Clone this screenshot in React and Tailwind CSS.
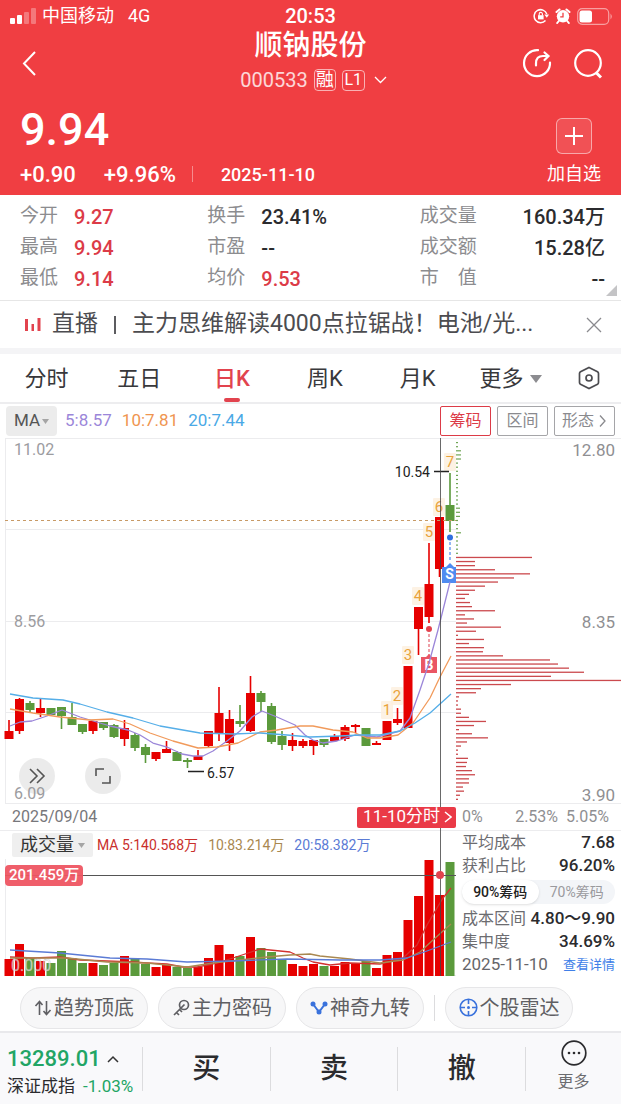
import { useState } from "react";

const UP = "#e60000";
const DOWN = "#5b9a3c";

// [high, bodyTop, bodyBottom, low, isUp], y inside the chart
const candles = [
  [282, 293, 301, 301, 1],
  [260, 261, 293, 296, 1],
  [263, 265, 272, 274, 0],
  [261, 270, 275, 279, 1],
  [270, 270, 277, 277, 0],
  [269, 269, 278, 291, 0],
  [265, 279, 287, 287, 0],
  [286, 286, 294, 296, 0],
  [283, 283, 293, 296, 1],
  [284, 284, 290, 292, 0],
  [286, 287, 299, 300, 0],
  [282, 290, 301, 308, 1],
  [295, 297, 310, 313, 0],
  [306, 309, 317, 325, 0],
  [314, 314, 321, 323, 1],
  [303, 311, 315, 315, 1],
  [313, 314, 323, 323, 0],
  [320, 322, 324, 330, 0],
  [312, 318, 322, 322, 1],
  [293, 293, 308, 310, 1],
  [249, 275, 296, 303, 1],
  [272, 281, 305, 313, 1],
  [267, 283, 286, 289, 0],
  [238, 255, 293, 294, 1],
  [253, 255, 264, 274, 0],
  [265, 268, 304, 306, 0],
  [293, 298, 307, 312, 0],
  [295, 302, 308, 313, 1],
  [301, 303, 308, 310, 1],
  [302, 302, 308, 317, 1],
  [301, 301, 307, 309, 0],
  [296, 298, 303, 303, 1],
  [287, 289, 301, 303, 1],
  [286, 287, 289, 295, 1],
  [290, 290, 308, 308, 0],
  [303, 305, 307, 307, 1],
  [283, 283, 302, 302, 1],
  [270, 281, 285, 287, 1],
  [228, 228, 290, 290, 1],
  [169, 169, 191, 217, 1],
  [105, 146, 179, 185, 1],
  [79, 79, 131, 139, 1],
  [35, 67, 83, 94, 0],
];

const volumes = [
  17, 32, 18, 15, 13, 25, 18, 13, 13, 11, 13, 20, 18, 12, 9, 11, 9, 8, 9, 18,
  31, 22, 20, 39, 28, 24, 16, 12, 10, 12, 10, 10, 14, 13, 15, 8, 21, 24, 56,
  80, 116, 81, 114,
];

const priceLines = [
  {
    color: "#9b86d9",
    points:
      "10,288 20,284 32,283 47,278 62,272 80,279 100,285 110,288 128,292 140,297 153,305 167,309 182,316 193,318 203,318 213,313 227,303 240,293 252,279 262,273 277,279 295,287 305,297 313,302 323,305 337,303 355,297 377,299 400,293 410,280 420,252 429,225 438,192 450,144",
  },
  {
    color: "#f19a5b",
    points:
      "10,271 33,275 60,279 90,282 113,281 130,286 150,295 173,303 198,310 217,309 238,305 260,294 277,292 300,288 313,288 333,292 353,294 367,300 380,300 398,297 413,285 430,260 440,239 451,218",
  },
  {
    color: "#55aee8",
    points:
      "10,256 33,260 63,262 80,266 107,274 133,280 160,288 200,295 233,296 260,295 287,297 310,299 340,298 360,297 380,297 400,293 415,285 430,275 451,256",
  },
];

const volumeLines = [
  {
    color: "#d3312f",
    points:
      "10,98 33,99 60,98 80,101 107,102 133,103 147,104 167,105 183,108 197,108 213,105 233,99 260,90 290,93 303,99 313,103 330,106 350,104 380,105 403,99 417,86 427,66 437,49 443,39 451,29",
  },
  {
    color: "#a98850",
    points:
      "10,99 67,99 107,103 147,104 187,108 213,104 240,101 267,98 290,96 310,95 320,97 350,100 380,104 403,101 420,93 433,81 443,72 451,65",
  },
  {
    color: "#5b7bd5",
    points:
      "10,91 60,94 80,96 110,99 147,100 187,103 233,102 287,100 340,101 380,101 407,99 427,92 451,83",
  },
];

// nine-turn counter labels above the candles
const turns = [
  [387, 272, 1],
  [397, 258, 2],
  [408, 217, 3],
  [418, 158, 4],
  [429, 94, 5],
  [439, 69, 6],
  [450, 24, 7],
];

const greenChips = [
  2, 2, 5, 5, 5, 2, 2, 2, 2, 2, 2, 2, 2, 2, 2, 2, 4, 4, 4, 2, 2, 2, 5, 2, 2, 2,
  2, 2,
];
const redChips = [
  76, 19, 19, 39, 74, 58, 42, 29, 19, 13, 9, 14, 16, 39, 9, 18, 11, 45, 20, 2,
  28, 13, 28, 27, 47, 94, 102, 113, 128, 95, 165, 55, 25, 20, 3, 2, 2, 5, 5, 13,
  30, 18, 3, 16, 32, 11, 5, 2, 2, 12, 11, 10, 16, 19, 13, 13, 7, 8, 4, 2,
];

const quotes = [
  ["今开", "9.27", "text-[#dc3b47]"],
  ["换手", "23.41%", "text-[#2b2b2e]"],
  ["成交量", "160.34万", "text-[#2b2b2e]"],
  ["最高", "9.94", "text-[#dc3b47]"],
  ["市盈", "--", "text-[#2b2b2e]"],
  ["成交额", "15.28亿", "text-[#2b2b2e]"],
  ["最低", "9.14", "text-[#dc3b47]"],
  ["均价", "9.53", "text-[#dc3b47]"],
  ["市　值", "--", "text-[#2b2b2e]"],
];

const candleX = (i) => 9 + i * 10.5;

function StatusBar() {
  return (
    <div className="relative flex h-8 items-center justify-between pr-2 pl-2.5 text-lg">
      <div className="flex items-center gap-1.5">
        <svg width="26" height="18" fill="#fff">
          <rect x="0" y="11" width="5" height="6" rx="1" />
          <rect x="7" y="8" width="5" height="9" rx="1" />
          <rect x="14" y="5" width="5" height="12" rx="1" opacity="0.3" />
          <rect x="21" y="1" width="5" height="16" rx="1" opacity="0.3" />
        </svg>
        <span>中国移动</span>
        <span className="ml-2">4G</span>
      </div>
      <span className="absolute left-1/2 -translate-x-1/2 text-xl font-medium">
        20:53
      </span>
      <div className="flex items-center gap-1.5">
        <svg width="16" height="16" fill="none" stroke="#fff" strokeWidth="1.5">
          <path d="M12.500 12.500A6.500 6.500 0 1 1 13.800 6" />
          <path d="M11.300 6.500h4.700L13.800 9.800z" fill="#fff" stroke="none" />
          <rect x="5" y="7.2" width="5.6" height="4.2" fill="#fff" stroke="none" />
          <path d="M6.2 7.5V6a1.6 1.6 0 0 1 3.2 0v1.5" strokeWidth="1.1" />
        </svg>
        <svg width="16" height="16" fill="#fff">
          <circle cx="8" cy="8.3" r="6.2" />
          <path
            d="M1.500 4 4.500 1.500M14.500 4 11.500 1.500M3.8 13 2.2 15M12.2 13l1.6 2"
            stroke="#fff"
            strokeWidth="2"
            strokeLinecap="round"
          />
          <path d="M8 4.8v4H5.2" fill="none" stroke="#f03e42" strokeWidth="1.3" />
        </svg>
        <svg width="36" height="17">
          <rect
            x="0.7"
            y="0.7"
            width="31"
            height="15.6"
            rx="4.5"
            fill="none"
            stroke="#fff"
            strokeOpacity="0.5"
            strokeWidth="1.2"
          />
          <rect x="2.5" y="2.5" width="12.5" height="12" rx="2.5" fill="#fff" />
          <path d="M33.5 5.5q2.6 3 0 6z" fill="#fff" opacity="0.5" />
        </svg>
      </div>
    </div>
  );
}

function Header() {
  return (
    <header className="bg-[#f03e42] pb-[3px] text-white">
      <StatusBar />
      <div className="flex items-start justify-between px-4">
        <button aria-label="返回" className="mt-4 w-[84px] pl-1">
          <svg width="18" height="30" fill="none" stroke="#fff" strokeWidth="2">
            <path d="M15 4 4 15.500 15 27" />
          </svg>
        </button>
        <div className="flex flex-col items-center">
          <h1 className="-mt-1 text-[28px] leading-9 font-medium">顺钠股份</h1>
          <div className="flex h-8 items-center gap-1.5 pl-2 text-xl text-white/80">
            <span>000533</span>
            <span className="flex h-[22px] w-[22px] items-center justify-center rounded-sm border border-white/60 text-lg text-white">
              融
            </span>
            <span className="flex h-[21px] w-[23px] items-center justify-center rounded-sm border border-white/60 text-base text-white">
              L1
            </span>
            <svg width="18" height="10" fill="none" stroke="#fff" strokeWidth="1.3">
              <path d="M4 2l5.500 5.500L15 2" />
            </svg>
          </div>
        </div>
        <div className="mt-4 flex w-[84px] justify-between">
          <button aria-label="分享">
            <svg
              width="32"
              height="32"
              fill="none"
              stroke="#fff"
              strokeWidth="2.2"
              strokeLinecap="round"
            >
              <path d="M17 2.200A13 13 0 1 0 29 14.500" />
              <path d="M15 17.500v-2c0-5 2.500-7.500 7-7.500h5" />
              <path d="M23.500 4.500l4 3.500-4 4" />
            </svg>
          </button>
          <button aria-label="搜索">
            <svg width="34" height="32" fill="none" stroke="#fff" strokeWidth="2.2">
              <circle cx="17" cy="15" r="12.800" />
              <path d="M25 24.500l5 5" strokeWidth="3" />
            </svg>
          </button>
        </div>
      </div>
      <div className="mt-2 flex items-end justify-between pr-5 pl-5">
        <div>
          <p className="text-[45px] leading-[52px] font-medium">9.94</p>
          <div className="flex h-9 items-center text-[22px] font-medium">
            <span>+0.90</span>
            <span className="ml-7">+9.96%</span>
            <span className="ml-4 h-4 w-px bg-white/40" />
            <span className="ml-7 text-[18px]">2025-11-10</span>
          </div>
        </div>
        <button className="flex flex-col items-center">
          <span className="flex h-9 w-9 items-center justify-center rounded-md border border-white/50 bg-white/10">
            <svg width="20" height="20" stroke="#fff" strokeWidth="2">
              <path d="M10 1v18M1 10h18" />
            </svg>
          </span>
          <span className="mt-0.5 h-9 text-lg leading-9">加自选</span>
        </button>
      </div>
    </header>
  );
}

function Quotes() {
  return (
    <dl className="relative grid grid-cols-[187fr_212fr_185fr] border-b border-[#e6e6e6] pt-1.5 pr-4 pb-1.5 pl-5">
      {quotes.map(([label, value, color], i) => (
        <div
          key={label}
          className={
            i % 3 === 2
              ? "flex h-[31px] items-center justify-between"
              : "flex h-[31px] items-center gap-4"
          }
        >
          <dt className="text-[19px] text-[#8c8c8f]">{label}</dt>
          <dd className={`text-xl font-medium ${color}`}>{value}</dd>
        </div>
      ))}
      <svg className="absolute right-1 bottom-1" width="11" height="11">
        <path d="M11 0v11H0z" fill="#c4c4c6" />
      </svg>
    </dl>
  );
}

function NewsBar() {
  return (
    <div className="flex h-[53px] items-center border-b-6 border-[#f4f4f6] pr-[18px] pl-6 text-[23px] text-[#4c4c50]">
      <svg className="shrink-0" width="18" height="14" fill="#e2434e">
        <rect x="1" y="1" width="3" height="12" />
        <rect x="7.500" y="6" width="2.500" height="7" />
        <rect x="13.500" y="0" width="3" height="13" />
      </svg>
      <a href="#live" className="ml-2.5 flex min-w-0 items-center">
        <span className="shrink-0">直播</span>
        <span className="mx-4 h-[18px] w-0.5 shrink-0 bg-[#5c5c60]" />
        <span className="truncate">主力思维解读4000点拉锯战！电池/光...</span>
      </a>
      <button aria-label="关闭" className="ml-auto">
        <svg width="18" height="18" stroke="#8a8a8e" strokeWidth="1.3">
          <path d="M2 2l14 14M16 2 2 16" />
        </svg>
      </button>
    </div>
  );
}

function PeriodTabs() {
  const [active, setActive] = useState("日K");

  return (
    <nav className="flex h-[50px] border-b-2 border-[#ededef] text-[22px] text-[#38383b]">
      {["分时", "五日", "日K", "周K", "月K"].map((tab) => (
        <button
          key={tab}
          onClick={() => setActive(tab)}
          className={
            tab === active
              ? "relative flex-1 font-medium text-[#e2434e]"
              : "relative flex-1"
          }
        >
          {tab}
          {tab === active && (
            <span className="absolute bottom-0 left-1/2 h-1 w-4 -translate-x-1/2 rounded-full bg-[#e2434e]" />
          )}
        </button>
      ))}
      <button className="flex flex-1 items-center justify-center gap-1.5">
        更多
        <svg width="12" height="9" fill="#8c8c90">
          <path d="M0 1h12L6 9z" />
        </svg>
      </button>
      <button aria-label="设置" className="flex w-16 items-center justify-center">
        <svg width="24" height="26" fill="none" stroke="#4c4c50" strokeWidth="1.7">
          <path d="M12 2.500l8.500 4.200q1 .6 1 1.700v9.200q0 1.100-1 1.700L12 23.500l-8.500-4.200q-1-.6-1-1.700V8.400q0-1.100 1-1.700z" />
          <circle cx="12" cy="13" r="3" />
        </svg>
      </button>
    </nav>
  );
}

function MaBar() {
  return (
    <div className="flex h-[34px] items-center pr-1.5 pl-1.5 text-[17px]">
      <button className="flex h-[30px] w-[51px] items-center justify-center gap-0.5 rounded-sm bg-[#ececec] text-[#555]">
        MA
        <svg width="7" height="5" fill="#a5a5a5">
          <path d="M0 0h7L3.500 5z" />
        </svg>
      </button>
      <span className="ml-2 text-[#9b86d9]">5:8.57</span>
      <span className="ml-2.5 text-[#ef9550]">10:7.81</span>
      <span className="ml-2.5 text-[#4aa9e6]">20:7.44</span>
      <div className="ml-auto flex gap-1.5 text-base text-[#8a8a8e]">
        <button className="h-[30px] w-[51px] rounded-xs border border-[#dc3b47] text-[#dc3b47]">
          筹码
        </button>
        <button className="h-[30px] w-[51px] rounded-xs border border-[#a5a5a8]">
          区间
        </button>
        <button className="flex h-[30px] w-[61px] items-center justify-center gap-1 rounded-xs border border-[#a5a5a8]">
          形态
          <svg width="9" height="14" fill="none" stroke="#8a8a8e" strokeWidth="1.3">
            <path d="M2 1.500l5 5.500-5 5.500" />
          </svg>
        </button>
      </div>
    </div>
  );
}

function Lines({ lines }) {
  return lines.map((line) => (
    <polyline
      key={line.color}
      points={line.points}
      fill="none"
      stroke={line.color}
      strokeWidth="1.3"
      strokeLinejoin="round"
    />
  ));
}

function PriceChart() {
  return (
    <div className="relative">
      <svg viewBox="0 0 456 366" className="block w-full">
        <path
          d="M5 .5H456M5 91.500H456M5 183.500H456M5 274.500H456M5 365.500H456M5.500 0V366"
          stroke="#ececee"
        />
        {candles.map(([high, top, bottom, low, up], i) => (
          <g key={i} fill={up ? UP : DOWN}>
            <rect x={candleX(i) - 0.8} y={high} width="1.6" height={low - high} />
            <rect x={candleX(i) - 4.5} y={top} width="9" height={bottom - top} />
          </g>
        ))}
        <path d="M5 82.500H456" stroke="#c89a66" strokeDasharray="3 3" />

        {turns.map(([x, y, n]) => (
          <g key={n}>
            <rect x={x - 6} y={y - 9} width="12" height="18" rx="1" fill="#fdf0df" fillOpacity="0.85" />
            <text x={x} y={y + 5} textAnchor="middle" fontSize="15" fill="#e9a23b">
              {n}
            </text>
          </g>
        ))}

        <path d="M434 33.500h15M188 333.500h16" stroke="#222" strokeWidth="1.5" />
        <text x="430" y="39" textAnchor="end" fontSize="14" fill="#222">
          10.54
        </text>
        <text x="207" y="340" fontSize="14" fill="#222">
          6.57
        </text>

        {/* buy / sell marks */}
        <circle cx="450" cy="99.500" r="3" fill="#2f6fe0" />
        <path d="M450 104v20" stroke="#6fa0ee" strokeWidth="1.5" strokeDasharray="3 2" />
        <path d="M442 129h4l4-4 4 4h2v16h-14z" fill="#4f8bf0" />
        <text x="449.500" y="141" textAnchor="middle" fontSize="14" fontWeight="700" fill="#fff">
          S
        </text>
        <circle cx="429" cy="191" r="3" fill="#e2434e" />
        <path d="M429 196v22" stroke="#e9808a" strokeWidth="1.5" strokeDasharray="3 2" />
        <path d="M421 219h5l3-3 3 3h5v16h-16z" fill="#ea5664" />
        <text x="429" y="232" textAnchor="middle" fontSize="14" fontWeight="700" fill="#fff">
          B
        </text>
        <Lines lines={priceLines} />

        <g fontSize="16" fill="#9c9c9f">
          <text x="14" y="17">11.02</text>
          <text x="14" y="189">8.56</text>
        </g>
      </svg>
      <div className="absolute bottom-2.5 left-[19px] flex gap-[30px]">
        <button
          aria-label="展开"
          className="flex h-9 w-9 items-center justify-center rounded-full bg-[#e9e9e9]/90"
        >
          <svg width="18" height="18" fill="none" stroke="#555" strokeWidth="1.6">
            <path d="M2 2l7 7-7 7M9 2l7 7-7 7" />
          </svg>
        </button>
        <button
          aria-label="全屏"
          className="flex h-9 w-9 items-center justify-center rounded-full bg-[#e9e9e9]/90"
        >
          <svg width="18" height="18" fill="none" stroke="#555" strokeWidth="1.6">
            <path d="M2 9V2h8M8 16h8V9" />
          </svg>
        </button>
      </div>
      <span className="absolute bottom-0 left-3.5 text-base leading-5 text-[#9c9c9f]">
        6.09
      </span>
    </div>
  );
}

function VolumeChart() {
  return (
    <div className="relative">
      <svg viewBox="0 0 456 117" className="block w-full">
        <path d="M5.500 0V117M5 116.500H456" stroke="#ececee" />
        {volumes.map((v, i) => (
          <rect
            key={i}
            x={candleX(i) - 4.5}
            y={117 - v}
            width="9"
            height={v}
            fill={candles[i][4] ? UP : DOWN}
          />
        ))}
        <Lines lines={volumeLines} />
        <path d="M5 16.500H456" stroke="#555" />
        <text x="11" y="112" fontSize="16" fill="#fff" fillOpacity="0.65" stroke="#aaa" strokeWidth="0.3">
          0.000
        </text>
      </svg>
      <span className="absolute top-1.5 left-[5px] h-[21px] rounded-sm bg-[#ee5562]/95 px-1 text-[15px] leading-[21px] font-medium text-white">
        201.459万
      </span>
      <span className="absolute top-3 left-[96.4%] z-10 -ml-1 h-2 w-2 rounded-full bg-[#e2434e]" />
    </div>
  );
}

function ChipChart() {
  return (
    <svg viewBox="0 0 165 366" className="block w-full">
      <path d="M0 .5H165M0 365.500H165" stroke="#ececee" />
      {greenChips.map((w, i) => (
        <rect key={i} x="0" y={4 + i * 4.1} width={w} height="1.2" fill="#6fa554" />
      ))}
      {redChips.map((w, i) => (
        <rect key={i} x="0" y={118.8 + i * 4.1} width={w} height="1.3" fill="#cb4a4e" />
      ))}
      <g fontSize="17" fill="#8f8f92" textAnchor="end">
        <text x="159" y="18">12.80</text>
        <text x="159" y="190">8.35</text>
        <text x="159" y="363">3.90</text>
      </g>
    </svg>
  );
}

function ChipRow({ label, value }) {
  return (
    <div className="flex h-[23px] items-center justify-between">
      <dt className="text-base text-[#6c6c70]">{label}</dt>
      <dd className="text-[17px] font-medium text-[#2b2b2e]">{value}</dd>
    </div>
  );
}

function ChipPanel() {
  return (
    <div className="flex flex-col">
      <ChipChart />
      <div className="flex h-[27px] items-center justify-between border-b border-[#ececee] pr-3 pl-1.5 text-base text-[#8f8f92]">
        <span className="grow">0%</span>
        <span className="mr-2">2.53%</span>
        <span>5.05%</span>
      </div>
      <dl className="pr-1.5 pl-1.5">
        <ChipRow label="平均成本" value="7.68" />
        <ChipRow label="获利占比" value="96.20%" />
        <div className="my-[3px] flex h-6 rounded-full bg-[#f3f5f8] text-sm">
          <button className="flex-1 rounded-full bg-white font-medium text-[#222] shadow-sm">
            90%筹码
          </button>
          <button className="flex-1 text-[#9a9a9e]">70%筹码</button>
        </div>
        <ChipRow label="成本区间" value="4.80～9.90" />
        <ChipRow label="集中度" value="34.69%" />
      </dl>
      <div className="flex h-[23px] items-center justify-between px-1.5 text-[17px] text-[#66666a]">
        <span>2025-11-10</span>
        <a href="#detail" className="text-[13px] text-[#3f7fe8]">
          查看详情
        </a>
      </div>
    </div>
  );
}

function Charts() {
  return (
    <section className="grid grid-cols-[minmax(0,456fr)_minmax(0,165fr)]">
      <div className="relative">
        <PriceChart />
        <div className="flex h-[27px] items-center justify-between border-b border-[#ececee] pl-3 text-base text-[#77777b]">
          <span>2025/09/04</span>
          <button className="relative z-10 flex h-[21px] items-center gap-1 rounded-xs bg-[#ea3a47] pr-1 pl-1.5 text-[17px] text-white">
            11-10分时
            <svg width="8" height="14" fill="none" stroke="#fff" strokeWidth="1.5">
              <path d="M1 2l6 5-6 5" />
            </svg>
          </button>
        </div>
        <div className="flex h-7 items-center pl-3 text-sm">
          <button className="flex h-6 items-center gap-1 rounded-xs bg-[#efefef] px-2 text-lg text-[#333]">
            成交量
            <svg width="7" height="5" fill="#a5a5a5">
              <path d="M0 0h7L3.500 5z" />
            </svg>
          </button>
          <span className="ml-1 text-[#c9302c]">MA 5:140.568万</span>
          <span className="ml-2.5 text-[#a98850]">10:83.214万</span>
          <span className="ml-2.5 text-[#5b7bd5]">20:58.382万</span>
        </div>
        <VolumeChart />
        {/* crosshair */}
        <span className="absolute inset-y-0 left-[96.4%] w-px bg-[#444]/80" />
      </div>
      <ChipPanel />
    </section>
  );
}

function Tools() {
  const pill =
    "flex h-[42px] w-32 items-center justify-center gap-0.5 rounded-full border border-[#e6e6e8] bg-[#f7f7f8]";

  return (
    <div className="flex h-[55px] items-center gap-2.5 pt-2 pl-5 text-xl whitespace-nowrap text-[#5f5f63]">
      <button className={pill}>
        <svg width="18" height="18" fill="none" stroke="#5f5f63" strokeWidth="1.6">
          <path d="M5.500 16V3M1.500 7l4-4.500 3 3.500M12.500 2v13M16.500 11l-4 4.500-3-3.500" />
        </svg>
        趋势顶底
      </button>
      <button className={pill}>
        <svg width="18" height="18" fill="none" stroke="#5f5f63" strokeWidth="1.700">
          <circle cx="12" cy="6" r="4.500" />
          <path d="M12.500 5.500 2 16M4.500 13.500l2.500 2.500M7.500 10.500l2.500 2.500" />
        </svg>
        主力密码
      </button>
      <button className={pill}>
        <svg width="18" height="18" fill="#3a72dc">
          <path d="M3 5l6 8 6-8" fill="none" stroke="#3a72dc" strokeWidth="2" />
          <circle cx="3" cy="5" r="2.500" />
          <circle cx="9" cy="13" r="2.500" />
          <circle cx="15" cy="5" r="2.500" />
        </svg>
        神奇九转
      </button>
      <span className="h-[26px] w-px bg-[#dcdcde]" />
      <button className={pill}>
        <svg width="19" height="19" fill="none" stroke="#3a72dc" strokeWidth="1.6">
          <circle cx="9.500" cy="9.500" r="8.300" />
          <path d="M9.500 1v5M9.500 13v5M1 9.500h5M13 9.500h5" />
          <circle cx="9.500" cy="9.500" r="1.500" fill="#3a72dc" stroke="none" />
        </svg>
        个股雷达
      </button>
    </div>
  );
}

function TradeBar() {
  return (
    <footer className="flex h-[73px] items-center border-t-2 border-[#e9e9ec] bg-[#f9f9fb] text-[#2b2b2e]">
      <div className="w-[142px] shrink-0 pt-2 pl-[7px]">
        <div className="flex h-7 items-center gap-1.5 text-[22px] font-medium text-[#22a565]">
          13289.01
          <svg width="12" height="8" fill="none" stroke="#333" strokeWidth="1.500">
            <path d="M1 7l5-5 5 5" />
          </svg>
        </div>
        <div className="flex h-7 items-center gap-2 text-[17px] whitespace-nowrap">
          深证成指
          <span className="text-[#22a565]">-1.03%</span>
        </div>
      </div>
      {["买", "卖", "撤"].map((action) => (
        <button
          key={action}
          className="h-11 flex-1 border-l border-[#dcdcde] text-[28px] leading-none font-medium"
        >
          {action}
        </button>
      ))}
      <div className="flex h-11 w-24 items-center justify-center border-l border-[#dcdcde] pb-1">
        <button className="flex flex-col items-center gap-[3px] text-base leading-6 text-[#6c6c70]">
          <svg width="28" height="28" fill="none" stroke="#2b2b2e" strokeWidth="1.700">
            <circle cx="14" cy="14" r="11.800" />
            <g fill="#2b2b2e" stroke="none">
              <circle cx="9" cy="14" r="1.300" />
              <circle cx="14" cy="14" r="1.300" />
              <circle cx="19" cy="14" r="1.300" />
            </g>
          </svg>
          更多
        </button>
      </div>
    </footer>
  );
}

function App() {
  return (
    <div className="min-h-screen bg-white font-[Roboto,'Noto_Sans_CJK_SC',sans-serif]">
      <Header />
      <Quotes />
      <NewsBar />
      <PeriodTabs />
      <MaBar />
      <Charts />
      <Tools />
      <TradeBar />
    </div>
  );
}

export default App;
